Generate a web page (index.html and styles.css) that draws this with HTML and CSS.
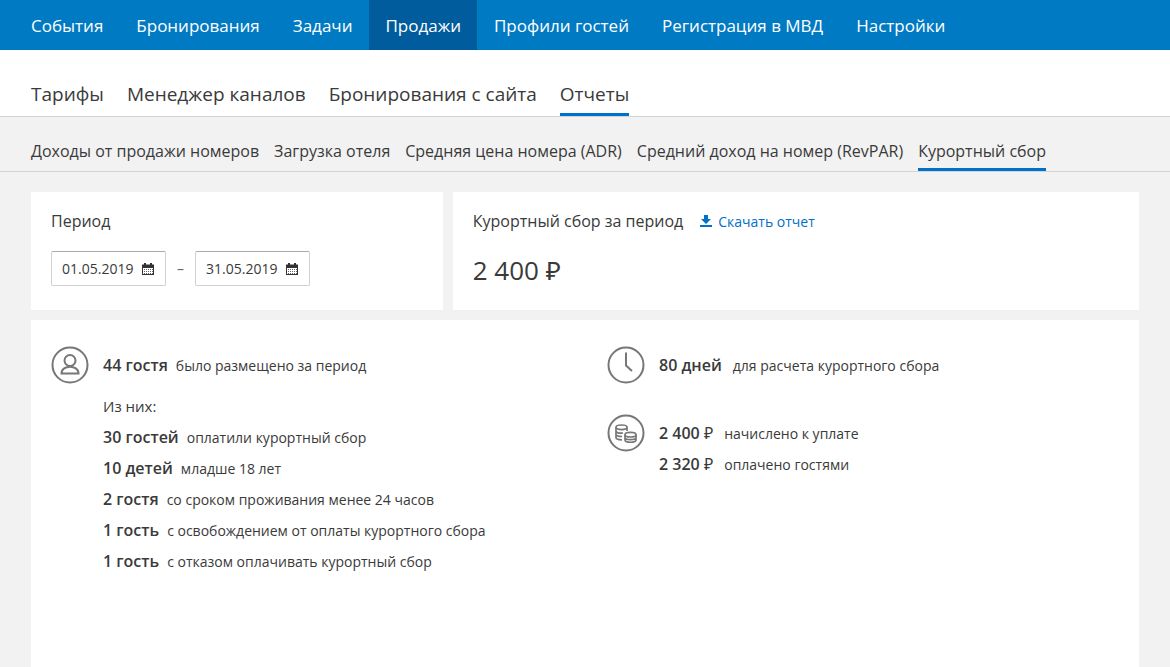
FILE: index.html
```html
<!DOCTYPE html>
<html lang="ru">
<head>
<meta charset="utf-8">
<meta name="viewport" content="width=device-width, initial-scale=1">
<title>Курортный сбор</title>
<link rel="stylesheet" href="styles.css">
</head>
<body>
<header>
  <nav class="main-nav" aria-label="Главное меню">
    <a href="#">События</a>
    <a href="#">Бронирования</a>
    <a href="#">Задачи</a>
    <a href="#" class="active">Продажи</a>
    <a href="#">Профили гостей</a>
    <a href="#">Регистрация в МВД</a>
    <a href="#">Настройки</a>
  </nav>
  <nav class="tabs" aria-label="Продажи">
    <a href="#">Тарифы</a>
    <a href="#">Менеджер каналов</a>
    <a href="#">Бронирования с сайта</a>
    <a href="#" class="active">Отчеты</a>
  </nav>
  <nav class="subtabs" aria-label="Отчеты">
    <a href="#">Доходы от продажи номеров</a>
    <a href="#">Загрузка отеля</a>
    <a href="#">Средняя цена номера (ADR)</a>
    <a href="#">Средний доход на номер (RevPAR)</a>
    <a href="#" class="active">Курортный сбор</a>
  </nav>
</header>
<main class="page">
  <section class="card">
    <h2 class="card-title">Период</h2>
    <div class="period">
      <div class="date">
        <input type="text" value="01.05.2019" aria-label="Начало периода">
        <svg class="calendar" viewBox="0 0 12 12" aria-hidden="true"><path d="M0 1.500h2V0h2v1.500h4V0h2v1.500h2V12H0z" fill="#333"/><path d="M1 5h10v6H1z" fill="#fff"/><path d="M2 6.500h9M2 8.500h9M2 10.500h9" stroke="#666" stroke-dasharray="1 1"/></svg>
      </div>
      <span class="dash">–</span>
      <div class="date">
        <input type="text" value="31.05.2019" aria-label="Конец периода">
        <svg class="calendar" viewBox="0 0 12 12" aria-hidden="true"><path d="M0 1.500h2V0h2v1.500h4V0h2v1.500h2V12H0z" fill="#333"/><path d="M1 5h10v6H1z" fill="#fff"/><path d="M2 6.500h9M2 8.500h9M2 10.500h9" stroke="#666" stroke-dasharray="1 1"/></svg>
      </div>
    </div>
  </section>
  <section class="card">
    <div class="card-head">
      <h2 class="card-title">Курортный сбор за период</h2>
      <a href="#" class="download"><svg viewBox="0 0 12 12" aria-hidden="true"><path d="M4 0h4v4h3L6 9 1 4h3zM0 10h12v2H0z" fill="#0070c9"/></svg>Скачать отчет</a>
    </div>
    <p class="total">2 400 ₽</p>
  </section>
  <section class="card details">
    <div class="group">
      <svg class="icon" viewBox="0 0 38 38" aria-hidden="true"><circle cx="19" cy="19" r="17.500"/><circle cx="19" cy="14.500" r="5.500"/><path d="M10.500 27.500c0-9 17-9 17 0z"/></svg>
      <ul class="facts">
        <li class="lead"><b>44 гостя</b><span>было размещено за период</span></li>
        <li class="label">Из них:</li>
        <li><b>30 гостей</b><span>оплатили курортный сбор</span></li>
        <li><b>10 детей</b><span>младше 18 лет</span></li>
        <li><b>2 гостя</b><span>со сроком проживания менее 24 часов</span></li>
        <li><b>1 гость</b><span>с освобождением от оплаты курортного сбора</span></li>
        <li><b>1 гость</b><span>с отказом оплачивать курортный сбор</span></li>
      </ul>
    </div>
    <div class="column">
      <div class="group">
        <svg class="icon" viewBox="0 0 38 38" aria-hidden="true"><circle cx="19" cy="19" r="17.500"/><path d="M19 6.500v13l6 5.500"/></svg>
        <ul class="facts">
          <li><b>80 дней</b><span>для расчета курортного сбора</span></li>
        </ul>
      </div>
      <div class="group">
        <svg class="icon" viewBox="0 0 38 38" aria-hidden="true"><circle cx="19" cy="19" r="17.500"/><g stroke-width="1.700"><ellipse cx="14.500" cy="13.300" rx="5.500" ry="2.300"/><path d="M9 13.300V23.500c0 1.500 2 2.300 6 2.300M20 13.300V17M9 16.800c0 2 3 2.700 7 2.200M9 20.200c0 1.600 2 2.200 6 2.300"/><ellipse cx="23.500" cy="20.700" rx="5.500" ry="2.300"/><path d="M18 20.700V26c0 3 11 3 11 0v-5.300M18 23.500c0 2.800 11 2.800 11 0"/></g></svg>
        <ul class="facts">
          <li><b>2 400 <i>₽</i></b><span>начислено к уплате</span></li>
          <li><b>2 320 <i>₽</i></b><span>оплачено гостями</span></li>
        </ul>
      </div>
    </div>
  </section>
</main>
</body>
</html>
```
FILE: styles.css
```css
* {
  box-sizing: border-box;
}

body {
  display: flex;
  flex-direction: column;
  min-height: 100vh;
  margin: 0;
  background: #f2f2f2;
  color: #3a3a3a;
  font-family: "Open Sans", "Noto Sans", sans-serif;
  font-size: 16px;
}

a {
  text-decoration: none;
}

h2,
p,
ul {
  margin: 0;
  padding: 0;
  font-weight: 400;
}

nav {
  display: flex;
  white-space: nowrap;
}

.main-nav {
  gap: 1px;
  padding: 0 15px;
  background: #007ac3;
}

.main-nav a {
  padding: 1px 16px 0;
  color: #fff;
  font-size: 17px;
  line-height: 49px;
}

.main-nav .active {
  background: #005c9c;
}

.tabs,
.subtabs {
  padding: 0 31px;
  border-bottom: 1px solid #d4d4d4;
}

.tabs {
  gap: 23px;
  padding-top: 26px;
  background: #fff;
}

.subtabs {
  gap: 15px;
  padding-top: 17px;
}

.tabs a,
.subtabs a {
  border-bottom: 3px solid transparent;
  color: #3a3a3a;
}

.tabs a {
  font-size: 19px;
  line-height: 37px;
}

.subtabs a {
  font-size: 16px;
  line-height: 34px;
}

.tabs .active,
.subtabs .active {
  border-color: #0070c9;
}

.page {
  flex: 1;
  display: grid;
  grid-template-columns: 3fr 5fr;
  grid-template-rows: auto 1fr;
  gap: 10px;
  padding: 20px 31px 0;
}

.card {
  padding: 17px 20px 23px;
  background: #fff;
}

.card-head {
  display: flex;
  align-items: center;
  gap: 17px;
}

.card-title {
  font-size: 16px;
  line-height: 24px;
}

.period {
  display: flex;
  align-items: center;
  gap: 11px;
  margin-top: 18px;
}

.date {
  display: flex;
  align-items: center;
  width: 115px;
  height: 35px;
  padding: 0 11px 0 10px;
  border: 1px solid #d0d0d0;
  border-top-color: #aaa;
  border-radius: 2px;
}

.date input {
  flex: 1;
  min-width: 0;
  padding: 0;
  border: 0;
  background: none;
  color: #3a3a3a;
  font: 14px "Open Sans", sans-serif;
}

.calendar {
  width: 12px;
  height: 12px;
}

.dash {
  color: #666;
  font-size: 14px;
}

.download {
  display: flex;
  align-items: center;
  gap: 6px;
  color: #0070c9;
  font-size: 14px;
}

.download svg {
  width: 12px;
  height: 12px;
}

.total {
  margin-top: 20px;
  font-size: 26px;
  line-height: 34px;
}

.details {
  grid-column: 1 / -1;
  display: grid;
  grid-template-columns: 1fr 1fr;
  gap: 44px;
  padding-top: 26px;
}

.column {
  display: flex;
  flex-direction: column;
  gap: 30px;
}

.group {
  display: flex;
  align-items: flex-start;
  gap: 14px;
}

.icon {
  flex: none;
  width: 38px;
  height: 38px;
  fill: none;
  stroke: #777;
  stroke-width: 2;
}

.facts {
  padding-top: 4px;
  list-style: none;
  line-height: 31px;
}

.facts li {
  display: flex;
  align-items: baseline;
  gap: 8px;
}

.column .facts li {
  gap: 11px;
}

.facts .lead {
  margin-bottom: 10px;
}

.facts .label {
  font-size: 15px;
}

.facts b {
  font-size: 16px;
  font-weight: 600;
}

.facts i {
  font-style: normal;
  font-weight: 400;
}

.facts span {
  font-size: 14px;
}
```
